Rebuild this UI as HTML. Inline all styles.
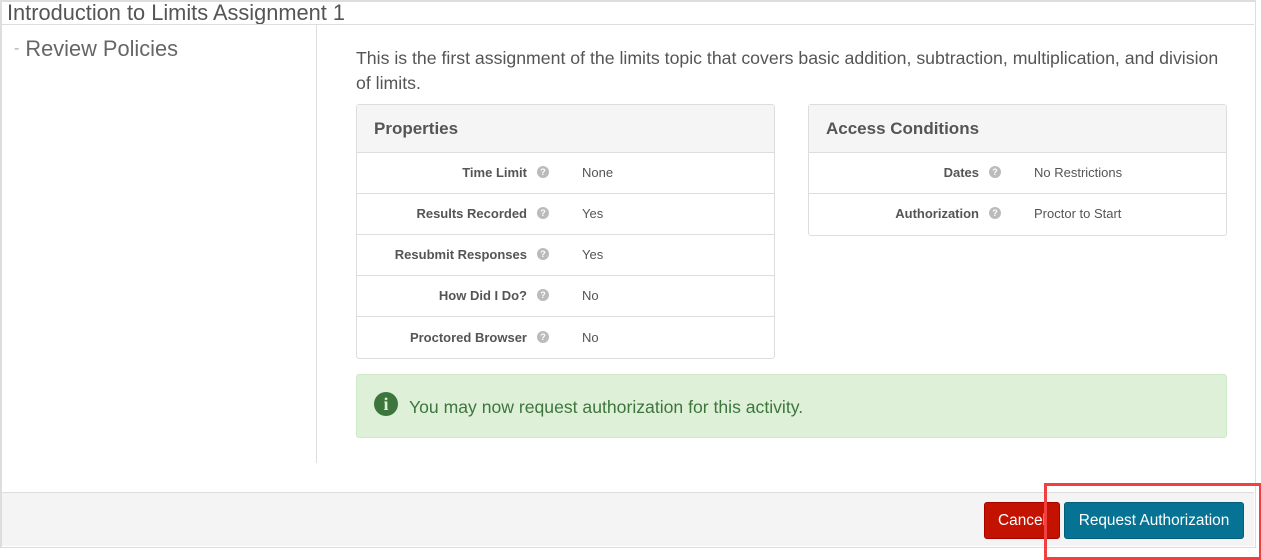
<!DOCTYPE html><html><head><style>
body{margin:0;width:1261px;height:559px;position:relative;background:#fff;font-family:"Liberation Sans",sans-serif;color:#555;overflow:hidden}
.a{position:absolute}
.panel{position:absolute;border:1px solid #ddd;border-radius:3px;background:#fff}
.ph{height:47px;background:#f5f5f5;border-bottom:1px solid #ddd;font-weight:bold;font-size:17px;line-height:47px;padding-left:17px;color:#555}
.row{height:40px;border-top:1px solid #ddd;position:relative;font-size:13px}
.row:nth-child(2){border-top:none}
.lb{position:absolute;right:247px;top:12px;font-weight:bold;color:#555}
.ic{position:absolute;left:180px;top:13px;width:12px;height:12px;border-radius:50%;background:#bbb;color:#fff;font-size:9px;font-weight:bold;text-align:center;line-height:12px}
.v{position:absolute;left:225px;top:12px;color:#555}
</style></head><body>
<div class="a" style="left:0;top:0;width:1253px;height:545px;border-style:solid;border-width:2px 1px 1px 2px;border-color:#ddd"></div>
<div class="a" style="left:7px;top:0px;font-size:21.8px;color:#555">Introduction to Limits Assignment 1</div>
<div class="a" style="left:2px;top:24px;width:1252px;height:1px;background:#ddd"></div>
<div class="a" style="left:316px;top:25px;width:1px;height:438px;background:#ddd"></div>
<div class="a" style="left:14px;top:36px;font-size:21.8px;color:#666"><span style="color:#aaa;font-size:16px;vertical-align:3px">-</span> Review Policies</div>
<div class="a" style="left:356px;top:46px;width:866px;font-size:17.7px;line-height:25px;color:#555">This is the first assignment of the limits topic that covers basic addition, subtraction, multiplication, and division of limits.</div>
<div class="panel" style="left:356px;top:104px;width:417px;height:253px">
<div class="ph">Properties</div>
<div class="row"><span class="lb">Time Limit</span><span class="ic">?</span><span class="v">None</span></div>
<div class="row"><span class="lb">Results Recorded</span><span class="ic">?</span><span class="v">Yes</span></div>
<div class="row"><span class="lb">Resubmit Responses</span><span class="ic">?</span><span class="v">Yes</span></div>
<div class="row"><span class="lb">How Did I Do?</span><span class="ic">?</span><span class="v">No</span></div>
<div class="row" style="height:41px"><span class="lb" style="top:13px">Proctored Browser</span><span class="ic" style="top:14px">?</span><span class="v" style="top:13px">No</span></div>
</div>
<div class="panel" style="left:808px;top:104px;width:417px;height:130px">
<div class="ph">Access Conditions</div>
<div class="row"><span class="lb">Dates</span><span class="ic">?</span><span class="v">No Restrictions</span></div>
<div class="row"><span class="lb">Authorization</span><span class="ic">?</span><span class="v">Proctor to Start</span></div>
</div>
<div class="a" style="left:356px;top:374px;width:869px;height:62px;background:#dff0d8;border:1px solid #d0e9c6;border-radius:3px"></div>
<div class="a" style="left:374px;top:392px;width:24px;height:24px;border-radius:50%;background:#3c763d;color:#dff0d8;font-family:'Liberation Serif',serif;font-weight:bold;font-size:18px;text-align:center;line-height:24px">i</div>
<div class="a" style="left:409px;top:397px;font-size:17.6px;color:#3c763d">You may now request authorization for this activity.</div>
<div class="a" style="left:2px;top:492px;width:1252px;height:53px;background:#f4f4f4;border-top:1px solid #ddd"></div>
<div class="a" style="left:984px;top:502px;width:74px;height:35px;background:#c31200;border:1px solid #a00;border-radius:3px;color:#fff;font-size:15.4px;line-height:35px;text-align:center">Cancel</div>
<div class="a" style="left:1064px;top:502px;width:178px;height:35px;background:#067394;border:1px solid #055e79;border-radius:3px;color:#fff;font-size:15.4px;line-height:35px;text-align:center">Request Authorization</div>
<div class="a" style="left:1044px;top:483px;width:212px;height:71px;border:3px solid #f04040"></div>
</body></html>
